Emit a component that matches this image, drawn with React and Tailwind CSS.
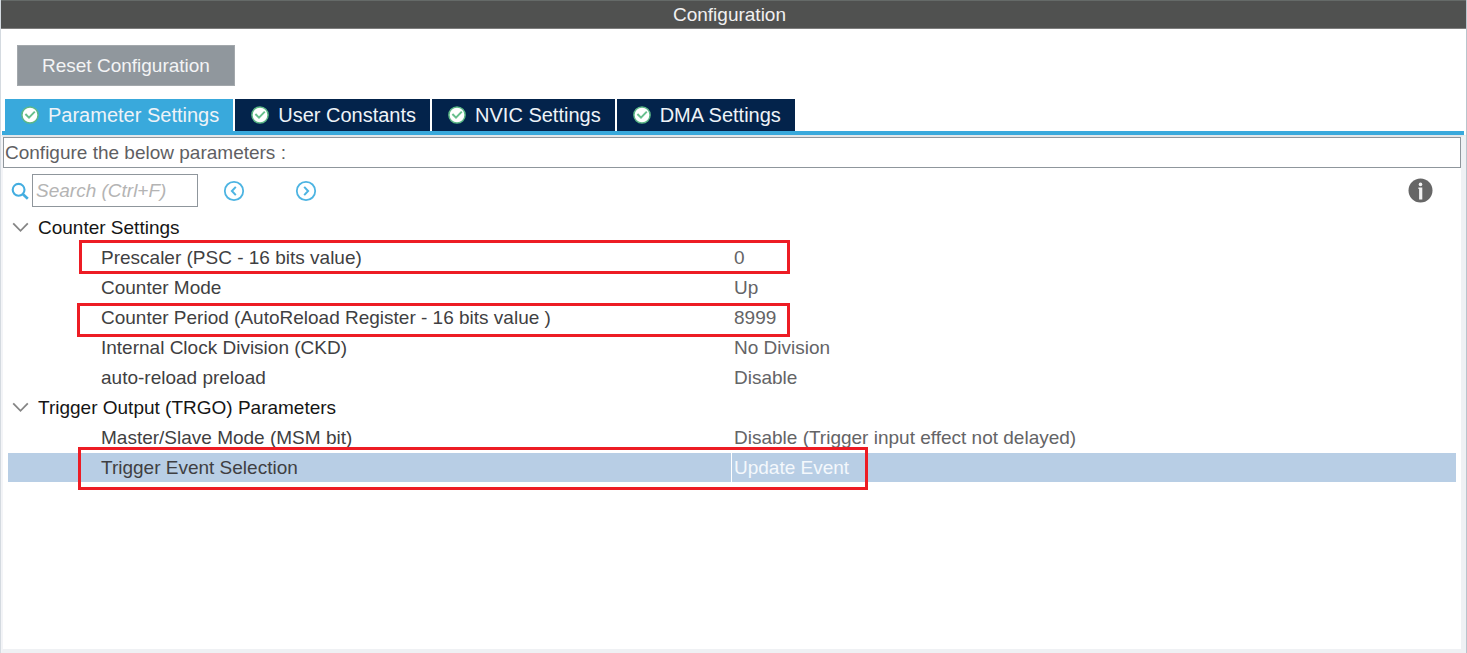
import { Fragment, useState } from "react";

const TABS = ["Parameter Settings", "User Constants", "NVIC Settings", "DMA Settings"];

const GROUPS = [
  {
    name: "Counter Settings",
    rows: [
      { label: "Prescaler (PSC - 16 bits value)", value: "0", mark: "left-[71px] -right-[58px] -top-[2px] h-[34px]" },
      { label: "Counter Mode", value: "Up" },
      { label: "Counter Period (AutoReload Register - 16 bits value )", value: "8999", mark: "left-[69px] -right-[58px] top-[1px] h-[34px]" },
      { label: "Internal Clock Division (CKD)", value: "No Division" },
      { label: "auto-reload preload", value: "Disable" },
    ],
  },
  {
    name: "Trigger Output (TRGO) Parameters",
    rows: [
      { label: "Master/Slave Mode (MSM bit)", value: "Disable (Trigger input effect not delayed)" },
      { label: "Trigger Event Selection", value: "Update Event", selected: true, mark: "left-[70px] -right-[136px] -top-[5px] h-[43px]" },
    ],
  },
];

function CheckBadge() {
  return (
    <svg className="size-[18px] shrink-0" viewBox="0 0 18 18" aria-hidden="true">
      <circle cx="9" cy="9" r="8.1" fill="#fff" stroke="#5cb886" strokeWidth="1.5" />
      <path d="M4.4 8 8 11.6l5.8-6" fill="none" stroke="#68c08e" strokeWidth="2" />
    </svg>
  );
}

function StepIcon({ d }) {
  return (
    <svg className="size-[22px]" viewBox="0 0 22 22" fill="none" stroke="#4db4e2" aria-hidden="true">
      <circle cx="11" cy="11" r="9.2" strokeWidth="1.8" />
      <path d={d} strokeWidth="2" />
    </svg>
  );
}

function GroupRows({ group }) {
  const [open, setOpen] = useState(true);
  return (
    <Fragment>
      <tr className="h-[30px]">
        <th colSpan={2} className="p-0 text-left font-normal">
          <button
            type="button"
            aria-expanded={open}
            onClick={() => setOpen(!open)}
            className="flex h-[30px] items-center gap-[9px] pt-[2px] pl-1 text-[#151515]"
          >
            <svg className="h-3 w-[17px]" viewBox="0 0 17 12" fill="none" stroke="#858585" strokeWidth="1.8" aria-hidden="true">
              <path d="M1.2 1.4 8.5 8.8 15.8 1.4" />
            </svg>
            {group.name}
          </button>
        </th>
      </tr>
      {open &&
        group.rows.map((row) => (
          <tr key={row.label} className="h-[30px]">
            <th scope="row" className="relative p-0 text-left font-normal text-[#3f3f42]">
              <div className={row.selected ? "mt-px mr-px h-[29px] bg-[#b8cee5] pl-[93px] leading-[29px]" : "h-[30px] pl-[93px] leading-8"}>
                {row.label}
              </div>
              {row.mark && (
                <span className={"pointer-events-none absolute z-10 border-3 border-[#ed1c24] " + row.mark} />
              )}
            </th>
            <td className="p-0">
              <div className={row.selected ? "mt-px h-[29px] bg-[#b8cee5] pl-[2px] leading-[29px] text-[#f4f8fc]" : "h-[30px] pl-[2px] leading-8 text-[#646466]"}>
                {row.value}
              </div>
            </td>
          </tr>
        ))}
    </Fragment>
  );
}

export default function App() {
  const [tab, setTab] = useState(0);
  return (
    <div className="flex min-h-screen flex-col border-l border-r border-l-[#d4dae0] border-r-[#b9c4cc] bg-white font-['Liberation_Sans',Arial,sans-serif] text-[19px] leading-6">
      <header className="h-[29px] border-t border-b border-t-[#656a68] border-b-[#7d7d7d] bg-[#505150] text-center">
        <h1 className="pr-2 leading-7 text-[#f0f0f0]">Configuration</h1>
      </header>

      <div className="px-4 pt-4">
        <button type="button" className="h-[41px] border border-[#a3a8ac] bg-[#90979d] px-6 text-[#f3f4f5]">
          Reset Configuration
        </button>
      </div>

      <div role="tablist" className="mr-[2px] ml-px mt-[13px] flex gap-[2px] border-b-4 border-[#39a9dc] pl-[3px]">
        {TABS.map((name, i) => (
          <button
            key={name}
            type="button"
            role="tab"
            aria-selected={tab === i}
            onClick={() => setTab(i)}
            className={
              "flex h-8 items-center gap-[9px] pr-[14px] pl-4 text-[20px] text-[#eef3f8] " +
              (tab === i ? "bg-[#39a9dc]" : "bg-[#03234b]")
            }
          >
            <CheckBadge />
            {name}
          </button>
        ))}
      </div>

      <main className="flex grow flex-col border-t-2 border-r-[5px] border-b-4 border-l-2 border-t-[#e3e7ea] border-r-[#eff1f4] border-b-[#eff1f4] border-l-[#f3f4f7]">
        <p className="h-[31px] border border-[#8f969c] pl-px leading-[29px] text-[#5f5f63]">
          Configure the below parameters :
        </p>

        <div className="mt-[6px] flex h-[33px] items-center pl-2">
          <label htmlFor="search" aria-label="Search" className="mr-[3px]">
            <svg className="size-[18px]" viewBox="0 0 18 18" fill="none" stroke="#43ade0" aria-hidden="true">
              <circle cx="7.6" cy="7.8" r="5.9" strokeWidth="2.1" />
              <path d="m12 12.2 4.8 4.6" strokeWidth="2.6" />
            </svg>
          </label>
          <input
            id="search"
            type="text"
            placeholder="Search (Ctrl+F)"
            className="h-[33px] w-[166px] border border-[#8f969c] px-[3px] placeholder:text-[#b4b4b4] placeholder:italic"
          />
          <button type="button" aria-label="Previous match" className="ml-[25px]">
            <StepIcon d="M12.8 6.9 8.9 11l3.9 4.1" />
          </button>
          <button type="button" aria-label="Next match" className="ml-[50px]">
            <StepIcon d="M9.2 6.9 13.1 11l-3.9 4.1" />
          </button>
          <button type="button" aria-label="Information" className="mr-[28px] ml-auto">
            <svg className="size-[25px]" viewBox="0 0 25 25" aria-hidden="true">
              <circle cx="12.5" cy="12.5" r="12" fill="#666" />
              <circle cx="12.5" cy="6.4" r="1.8" fill="#f2f2f2" />
              <path d="M10.4 9.6h3.9v12h-3.2V11h-.7z" fill="#f2f2f2" />
            </svg>
          </button>
        </div>

        <div className="mt-[5px] px-[5px]">
          <table className="w-full table-fixed border-collapse">
            <tbody>
              {GROUPS.map((group) => (
                <GroupRows key={group.name} group={group} />
              ))}
            </tbody>
          </table>
        </div>
      </main>
    </div>
  );
}
